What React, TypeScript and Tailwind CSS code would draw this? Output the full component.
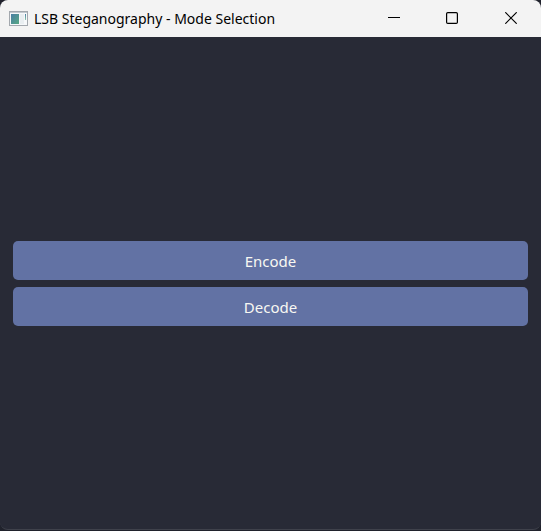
function AppIcon() {
  return (
    <svg width="19" height="15" viewBox="0 0 19 15" aria-hidden="true">
      <defs>
        <linearGradient id="screen" x1="0" y1="0" x2="1" y2="1">
          <stop offset="0" stopColor="#4a7fa5" />
          <stop offset="1" stopColor="#57a883" />
        </linearGradient>
        <linearGradient id="strip" x1="0" y1="0" x2="0" y2="1">
          <stop offset="0" stopColor="#4a7fa5" />
          <stop offset="1" stopColor="#8cc9a8" />
        </linearGradient>
      </defs>
      <rect x="0.5" y="0.5" width="18" height="14" fill="#f6f8fa" stroke="#a3a8ae" />
      <rect x="1" y="1" width="17" height="1" fill="#c3c9cf" />
      <rect x="2" y="3" width="8" height="10" fill="url(#screen)" />
      <rect x="11" y="3" width="4" height="10" fill="#e9eef1" />
      <rect x="16" y="3" width="1" height="6" fill="url(#strip)" />
    </svg>
  );
}

const captionButton = "flex h-full items-center justify-center text-black hover:bg-black/10";

function TitleBar() {
  return (
    <header className="flex h-[37px] shrink-0 items-center bg-[#f3f3f3] pb-px pl-[9px]">
      <AppIcon />
      <h1 className="ml-1.5 flex-1 truncate pt-0.5 text-sm leading-5 text-black">
        LSB Steganography - Mode Selection
      </h1>
      <div className="flex h-full">
        <button type="button" aria-label="Minimize" className={`${captionButton} w-[58px]`}>
          <svg width="12" height="12" viewBox="0 0 12 12" fill="none" stroke="currentColor">
            <path d="M0 5.5H12" />
          </svg>
        </button>
        <button type="button" aria-label="Maximize" className={`${captionButton} w-[58px]`}>
          <svg width="12" height="12" viewBox="0 0 12 12" fill="none" stroke="currentColor" strokeWidth="1.2">
            <rect x="0.6" y="0.6" width="10.8" height="10.8" rx="1.2" />
          </svg>
        </button>
        <button type="button" aria-label="Close" className={`${captionButton} w-[60px]`}>
          <svg width="12" height="12" viewBox="0 0 12 12" fill="none" stroke="currentColor" strokeWidth="1.2">
            <path d="M0.3 0.3L11.7 11.7M11.7 0.3L0.3 11.7" />
          </svg>
        </button>
      </div>
    </header>
  );
}

function ModeButton({ label }: { label: string }) {
  return (
    <button
      type="button"
      className="h-[39px] w-full rounded-[5px] bg-[#6272a4] pt-0.5 text-[15px] leading-5 text-[#f8f8f2]"
    >
      {label}
    </button>
  );
}

export default function App() {
  return (
    <div className="h-screen bg-[#20222c] pb-px font-['Noto_Sans','Open_Sans',sans-serif]">
      <div className="flex h-full flex-col overflow-hidden rounded-lg border-b border-[#3f414b] bg-[#282a36]">
        <TitleBar />
        <main className="flex flex-1 flex-col justify-center gap-[7px] px-[13px]">
          <ModeButton label="Encode" />
          <ModeButton label="Decode" />
        </main>
      </div>
    </div>
  );
}
